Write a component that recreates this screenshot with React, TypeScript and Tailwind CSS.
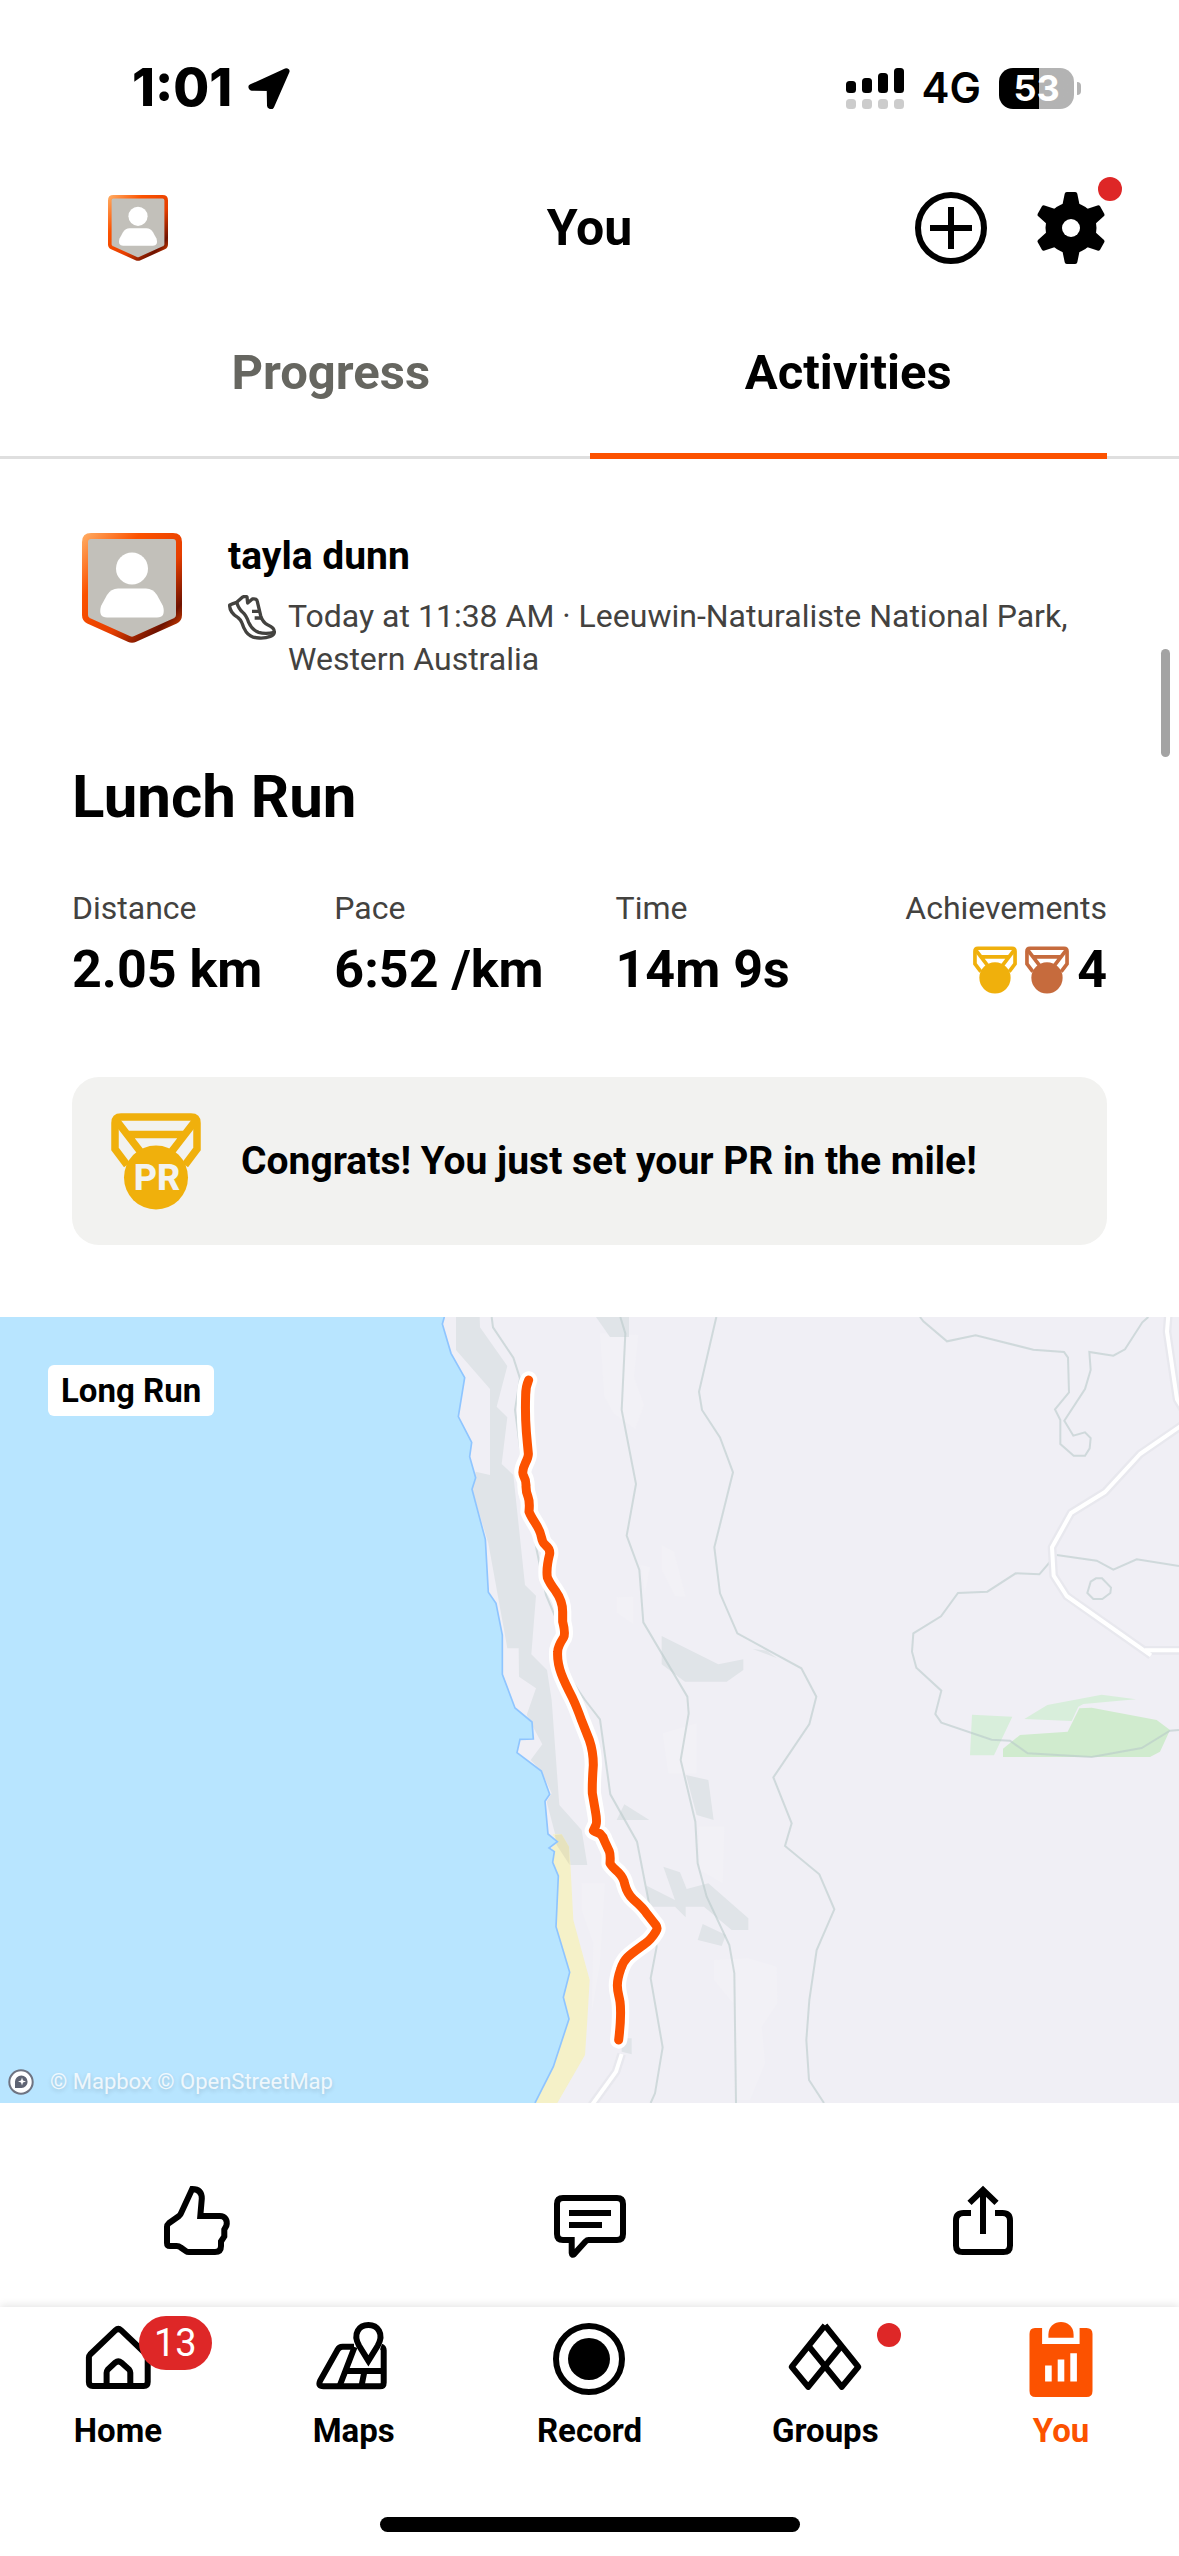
import React, { useId } from 'react';
import clsx from 'clsx';

const ORANGE = '#fc5200';
const GOLD = '#f0b00c';
const BRONZE = '#c66b3d';

interface IconProps {
  className?: string;
}

interface StrokeIconProps extends IconProps {
  children: React.ReactNode;
}

function StrokeIcon({ className = 'size-[72px]', children }: StrokeIconProps) {
  return (
    <svg
      viewBox="0 0 24 24"
      fill="none"
      stroke="currentColor"
      strokeWidth={2}
      aria-hidden="true"
      className={clsx('shrink-0 overflow-visible', className)}
    >
      {children}
    </svg>
  );
}

/* ---------- Icons ---------- */

function LocationIcon() {
  return (
    <svg viewBox="0 0 125 124" aria-hidden="true" className="h-[41px] w-[42px]">
      <path d="M115 10 10 58l1 1 54 1 1 54 3 1Z" fill="#000" stroke="#000" strokeWidth={19} strokeLinejoin="round" />
    </svg>
  );
}

function SignalIcon() {
  return (
    <svg viewBox="0 0 58 41" aria-hidden="true" className="h-[41px] w-[58px]">
      {[12, 15, 20, 25].map((h, i) => (
        <g key={h}>
          <rect x={i * 16} y={25 - h} width={10} height={h} rx={3.5} fill="#000" />
          <rect x={i * 16} y={31} width={10} height={10} rx={3.5} fill="#ccc" />
        </g>
      ))}
    </svg>
  );
}

function GearIcon() {
  return (
    <svg viewBox="0 0 24 24" aria-hidden="true" className="size-[72px]">
      <circle cx={12} cy={12} r={8.5} />
      {[0, 60, 120, 180, 240, 300].map((deg) => (
        <path
          key={deg}
          d="M8.4 5 9.2 4 9.9.6Q10-0 10.6 0h2.8q.6 0 .7.6L14.8 4l.8 1Z"
          transform={`rotate(${deg} 12 12)`}
        />
      ))}
      <circle cx={12} cy={12} r={3} fill="#fff" />
    </svg>
  );
}

function ShieldAvatar({ className }: IconProps) {
  const id = useId();
  return (
    <svg viewBox="0 0 100 110" role="img" aria-label="Profile photo" className={className}>
      <defs>
        <linearGradient id={id} x1="0" y1="0" x2="1" y2="1">
          <stop offset="0" stopColor="#ffa65c" />
          <stop offset="0.28" stopColor="#fc5200" />
          <stop offset="0.6" stopColor="#e63e00" />
          <stop offset="0.84" stopColor="#6e1200" />
          <stop offset="1" stopColor="#fc5200" />
        </linearGradient>
      </defs>
      <path
        d="M9 3H91Q97 3 97 9V82Q97 86 93.500 87.700L53 106Q50 107.500 47 106L6.500 87.700Q3 86 3 82V9Q3 3 9 3Z"
        fill="#c2c0ba"
        stroke={`url(#${id})`}
        strokeWidth={6}
      />
      <circle cx={50} cy={35.5} r={16} fill="#fff" />
      <path d="M36 55.500H64Q71 55.500 75 62L81 73Q84 84.500 75 84.500H25Q16 84.500 19 73L25 62Q29 55.500 36 55.500Z" fill="#fff" />
    </svg>
  );
}

function ShoeIcon() {
  return (
    <svg
      viewBox="0 0 144 135"
      fill="none"
      stroke="#43423f"
      strokeWidth={10}
      strokeLinejoin="round"
      aria-hidden="true"
      className="h-[45px] w-12 shrink-0"
    >
      <path d="M5 30Q15 26 26 22L44 6Q54 2 57 6L59 24 73 12Q87 10 88 20L98 62Q104 82 120 90Q139 98 139 110Q140 119 127 124Q112 130 94 129Q68 129 54 110Q46 98 42 84Q40 76 30 68Q4 52 5 30Z" />
      <path d="M26 22Q32 42 44 52Q54 60 62 82Q72 105 92 112Q112 118 139 112" />
      <path d="M72 49H95M80 69H101" />
    </svg>
  );
}

interface MedalProps extends IconProps {
  color: string;
  label?: string;
}

function Medal({ color, label, className }: MedalProps) {
  return (
    <svg viewBox="0 0 90 97" aria-hidden="true" className={className}>
      <g fill="none" stroke={color} strokeWidth={7.5}>
        <path d="M16 52 4 36V10Q4 4 10 4H80Q86 4 86 10V36L74 52" />
        <path d="M15 21.500H75M5 7 32 42M85 7 58 42" />
      </g>
      <circle cx={45} cy={64.5} r={32} fill={color} />
      {label && (
        <text x={46} y={77} textAnchor="middle" fill="#f2f2f0" className="font-['Roboto',sans-serif] text-[36px] font-extrabold">
          {label}
        </text>
      )}
    </svg>
  );
}

function HomeIcon() {
  return (
    <StrokeIcon>
      <path d="M11.200 2.400 2.700 10.500Q2.300 10.900 2.300 11.500V19.700Q2.300 21 3.600 21H20.600Q21.900 21 21.900 19.700V11.500Q21.900 10.900 21.500 10.500L13 2.400Q12.100 1.600 11.200 2.400Z" />
      <path d="M8.200 21V16.600Q8.200 16 8.600 15.500L11.100 13.200Q12.100 12.400 13.100 13.200L15.700 15.500Q16.100 16 16.100 16.600V21" />
    </StrokeIcon>
  );
}

function MapsIcon() {
  return (
    <StrokeIcon>
      <path d="M12 7.900H8.200Q7 7.900 6.500 9L.7 19.300Q-.1 21.100 1.800 21.100H20.600Q21.900 21.100 21.900 19.800V9.200Q21.900 8.200 21 7.900" />
      <path d="M12.200 8 7.200 21M9.600 16H22M15.500 16 14.500 21" />
      <path d="M16.800 12.600 13.700 7.600C11.400 3.500 13.800.7 16.800.7S22.200 3.500 19.900 7.600Z" />
    </StrokeIcon>
  );
}

function RecordIcon() {
  return (
    <StrokeIcon>
      <circle cx={12} cy={12} r={11} />
      <circle cx={12} cy={12} r={7} fill="currentColor" stroke="none" />
    </StrokeIcon>
  );
}

function GroupsIcon() {
  return (
    <StrokeIcon>
      <path d="M12 .8.9 14.600 6.400 21.300 17.500 7.600M12 .8 23.100 14.600 17.600 21.300 6.500 7.600" strokeLinejoin="round" />
    </StrokeIcon>
  );
}

function YouIcon() {
  return (
    <StrokeIcon>
      <g stroke="none" fill="currentColor">
        <path d="M3.300 1.700H5.700V7H18.200V1.700H20.500Q22.500 1.700 22.500 3.700V22.700Q22.500 24.700 20.500 24.700H3.500Q1.500 24.700 1.500 22.700V3.700Q1.500 1.700 3.300 1.700Z" />
        <path d="M7.800 4.900V3.900C7.800-1.700 16.200-1.700 16.200 3.900V4.900Z" />
        <path d="M6.700 14.200H8.900V19.500H6.700ZM10.900 12.200H13.100V19.500H10.900ZM15.100 10.100H17.300V19.500H15.100Z" fill="#fff" />
      </g>
    </StrokeIcon>
  );
}

function KudosIcon() {
  return (
    <StrokeIcon>
      <path d="M10.400 1 6.700 9Q6.500 9.600 6 10L2.600 12.400Q2 12.900 2 13.600V19Q2 20 3 20H5.200Q6 20 6.600 20.500L8.300 21.700Q8.700 22 9.300 22H18Q20 22 20 20V18.500L21.100 16.800V14.500L21.800 13.200C22.300 11.400 21.300 10 19.600 10H13.100L13.600 4.200Q13.600 1 10.400 1Z" />
    </StrokeIcon>
  );
}

function CommentIcon() {
  return (
    <StrokeIcon>
      <path d="M3 4H21Q23 4 23 6V16Q23 18 21 18H11.500Q11 18 10.500 18.500L6.700 22.700Q6 23.300 5.900 22.300V18H3Q1 18 1 16V6Q1 4 3 4Z" />
      <path d="M5 9H19M5 13H16" />
    </StrokeIcon>
  );
}

function ShareIcon() {
  return (
    <StrokeIcon>
      <path d="M8 9H5.500Q3 9 3 11.500V19.800Q3 22 5.200 22H18.800Q21 22 21 19.800V11.500Q21 9 18.500 9H16" />
      <path d="M12 16V1.500M7.500 5.600 12 1.300 16.500 5.600" />
    </StrokeIcon>
  );
}

/* ---------- Route map ---------- */

const COAST =
  'L133 21 127 42 153 130 194 203 175 320 215 397 209 440 227 503 216 538 256 688 265 847 288 880 307 975 307 1093 345 1194 396 1236 400 1287 360 1288 351 1328 424 1383 449 1453 435 1474 444 1572 472 1595 447 1614 463 1625 458 1657 475 1698 468 1850 509 1987 490 2062 507 2127 460 2270 405 2379';

const ROUTE =
  'M386 210Q377 230 377 255Q375 315 379 365Q382 400 385 430Q386 440 376 460Q364 485 371 498Q379 512 378 530Q378 545 384 560Q390 575 387 605Q392 618 405 638Q421 663 424 680Q427 697 436 705Q451 717 449 732Q438 775 442 802Q448 818 466 842Q488 873 488 905L488 935Q497 970 491 982Q473 1010 473 1025C470 1070 490 1110 518 1165Q530 1190 545 1232L568 1290Q580 1325 580 1365Q576 1420 577 1450L586 1502Q592 1535 588 1545L580 1562Q584 1566 600 1571Q610 1580 613 1592L628 1624Q632 1634 630 1660Q635 1670 655 1687Q672 1705 674 1722Q682 1752 700 1768Q730 1794 742 1813L768 1846Q774 1855 768 1864Q752 1890 734 1902C690 1934 672 1944 662 1978C644 2030 655 2045 660 2075Q665 2115 656 2190';

function RouteMap() {
  return (
    <svg
      viewBox="-1200 21 3537 2358"
      preserveAspectRatio="xMidYMid slice"
      role="img"
      aria-label="Route map"
      className="block w-full"
    >
      <rect x={-1200} y={21} width={3537} height={2358} fill="#f0eff5" />

      {/* scrub */}
      <g fill="#f2f1f6">
        <path d="M600 70 715 75 702 200 732 285 705 357 640 310 613 260Z" />
        <path d="M785 705 822 725 857 860 825 858 785 780ZM650 862 700 860 700 942 650 908ZM722 765 750 772 735 850Z" />
        <path d="M788 1270 890 1240 890 1390 805 1390ZM895 1550 973 1550 968 1720 900 1680ZM942 1950 1045 1945 1130 1970 1132 2080 1085 2150 1095 2260 1050 2370 1005 2370 1000 2080 942 2010ZM545 1720 615 1720 600 1960 575 2110 580 1900 545 1800Z" />
      </g>

      {/* cliffs and rock */}
      <g fill="#e0e4e8">
        <path d="M168 21H239L240 52 322 168 290 290 322 322 305 462 340 495 375 825 408 857 394 1033 441 1080 455 1170 478 1485 545 1560 562 1665H510L470 1590 440 1475 455 1450 424 1383 392 1350 427 1303 380 1215 408 1135 357 1100 356 1015H322L265 700 216 538 227 485 270 495V237L168 120Z" />
        <path d="M588 21H687V81H630Z" />
        <path d="M785 978 955 1063 1030 1048V1080L980 1115H855L785 1063Z" />
        <path d="M1058 1017 1100 1022 1130 1044Z" />
        <path d="M858 1395 925 1410 941 1530 890 1515Z" />
        <path d="M673 1483 748 1530H650Z" />
        <path d="M740 1727 825 1770 790 1670 840 1687 860 1737 925 1720 1045 1825V1860H995L912 1790H857V1822L825 1790H745Z" />
        <path d="M908 1842 978 1875 965 1908 893 1890Z" />
        <path d="M665 2185H695V2233L665 2225Z" />
      </g>

      {/* beach */}
      <path
        d="M485 1573 507 1610 511 1660 520 1830 569 2010 562 2130 555 2235 472 2379H405L460 2270 507 2127 490 2062 509 1987 468 1850 475 1698 458 1657 463 1625 455 1614 472 1595 458 1573Z"
        fill="#f5f1c8"
      />
      <path d="M485 1573 507 1610 509 1665 470 1605 465 1575Z" fill="#e6e2be" />

      <path d={`M-1200 21${COAST}L-1200 2379Z`} fill="#b8e5ff" />
      <path d={COAST.replace('L', 'M')} fill="none" stroke="#8fc5ff" strokeWidth={5} />

      {/* reserves */}
      <path d="M1809 1316 1860 1275 2003 1265 2038 1195 2075 1193 2270 1230 2310 1260 2280 1325 2250 1341H1809Z" fill="#d0ebce" />
      <path d="M1716 1214 1837 1220 1782 1336H1710ZM1873 1227 1942 1185 2105 1154 2208 1168 2050 1182 2035 1190 2015 1233Z" fill="#d8eedb" />

      {/* trails */}
      <g fill="none" stroke="#b9c9ca" strokeOpacity={0.6} strokeWidth={6}>
        <path d="M275 21 279 52 340 143 360 205 345 300 372 500 410 720 438 855 470 930 500 1090 555 1170 600 1228 631 1453 711 1595 745 1770 770 1910 752 2005 788 2212 765 2350 752 2379" />
        <path d="M661 21 676 70 665 300 708 522 680 677 718 780 730 937 862 1160 866 1210 842 1350 886 1535 893 1660 920 1760 988 1905 1003 1990 1008 2379" />
        <path d="M949 21 897 245 906 300 960 382 999 487 943 712 960 850 1012 970 1204 1075 1249 1160 1228 1242 1120 1402 1175 1540 1155 1608 1258 1693 1303 1798 1250 1920 1228 2070 1219 2190 1227 2310 1272 2379" />
        <path d="M1560 21 1570 34 1641 94 1727 76 1900 119 1992 126 2004 143 2007 247 1965 298 1981 330V402L2021 437H2055L2069 415 2072 384 2055 367 2020 377 1993 332 2055 237 2072 180 2068 126 2140 137 2175 118 2227 37 2245 21" />
        <path d="M2337 768 2210 748 2140 779 2090 752 1970 735M1955 750 1918 793 1847 790 1762 845 1674 849 1623 919 1540 970 1536 1025 1549 1073 1624 1142 1606 1212 1624 1238 1775 1289 1830 1292 1883 1330 2075 1341 2225 1314 2310 1262 2337 1260" />
        <path d="M2072 815 2088 805H2106L2133 833 2131 849 2107 867H2080L2062 849Z" />
      </g>

      {/* roads: casing first, then the white surface */}
      {[
        { stroke: '#e8e8ee', width: 26 },
        { stroke: '#fff', width: 12 },
      ].map(({ stroke, width }) => (
        <g key={stroke} fill="none" stroke={stroke} strokeWidth={width} strokeLinejoin="round">
          <path d="M2305 15 2301 65 2331 268 2350 300" />
          <path d="M2345 346 2220 432 2115 546 2013 609 1956 712 1961 797 2000 858 2253 1036M2235 1021H2345" />
          <path d="M665 2232 648 2285 575 2386" />
        </g>
      ))}

      {/* recorded route */}
      <g fill="none" strokeLinecap="round" strokeLinejoin="round">
        <path d={ROUTE} stroke="#fff" strokeWidth={52} />
        <path d={ROUTE} stroke={ORANGE} strokeWidth={27} />
      </g>
    </svg>
  );
}

function MapboxMark() {
  return (
    <svg viewBox="0 0 26 26" aria-hidden="true" className="size-[26px]">
      <circle cx={13} cy={13} r={11.7} fill="#fff" stroke="#6f7482" strokeWidth={2} />
      <path d="M7 19V12.500A6.300 6.300 0 1 1 13.500 19Z" fill="#5f6473" />
      <path d="M14 8.500 15 11.500 18 12.500 15 13.500 14 16.500 13 13.500 10 12.500 13 11.500Z" fill="#fff" />
    </svg>
  );
}

/* ---------- Page ---------- */

const STATS = [
  { label: 'Distance', value: '2.05 km' },
  { label: 'Pace', value: '6:52 /km' },
  { label: 'Time', value: '14m 9s' },
];

const TABS = [
  { label: 'Progress', active: false },
  { label: 'Activities', active: true },
];

const ACTIONS = [
  { label: 'Give kudos', Icon: KudosIcon },
  { label: 'Comment', Icon: CommentIcon },
  { label: 'Share', Icon: ShareIcon },
];

const NAV_ITEMS = [
  { label: 'Home', Icon: HomeIcon, count: 13 },
  { label: 'Maps', Icon: MapsIcon },
  { label: 'Record', Icon: RecordIcon },
  { label: 'Groups', Icon: GroupsIcon, dot: true },
  { label: 'You', Icon: YouIcon, active: true },
];

function StatusBar() {
  return (
    <div className="flex h-[176px] items-center justify-between pr-[98px] pl-[132px] font-['Inter',sans-serif]">
      <div className="flex items-center gap-4">
        <span className="text-[52px] leading-none font-extrabold">1:01</span>
        <LocationIcon />
      </div>
      <div className="flex items-center gap-[18px]">
        <SignalIcon />
        <span className="text-[42px] leading-none font-semibold">4G</span>
        <div className="flex items-center gap-[3px]">
          <div className="flex h-[41px] w-[75px] items-center justify-center rounded-[14px] bg-linear-to-r from-black from-53% to-[#b3b3b3] to-53% text-[36px] leading-none font-bold text-white">
            53
          </div>
          <div className="h-[13px] w-1 rounded-r-full bg-[#b3b3b3]" />
        </div>
      </div>
    </div>
  );
}

export default function App() {
  return (
    <div className="relative flex min-h-screen flex-col bg-white font-['Roboto',sans-serif] text-black">
      <StatusBar />

      <header className="grid h-[104px] grid-cols-[1fr_auto_1fr] items-center px-[72px]">
        <button type="button" aria-label="Profile" className="ml-9 justify-self-start">
          <ShieldAvatar className="h-[66px] w-[60px]" />
        </button>
        <h1 className="text-[50px] leading-[60px] font-bold">You</h1>
        <div className="flex gap-12 justify-self-end">
          <button type="button" aria-label="Add">
            <StrokeIcon>
              <circle cx={12} cy={12} r={11} />
              <path d="M12 5V19M5 12H19" />
            </StrokeIcon>
          </button>
          <button type="button" aria-label="Settings" className="relative">
            <GearIcon />
            <span className="absolute -top-[15px] -right-[15px] size-6 rounded-full bg-[#de2727]" />
          </button>
        </div>
      </header>

      <div role="tablist" className="flex border-b-[3px] border-[#dfdfdf] px-[72px]">
        {TABS.map(({ label, active }) => (
          <button
            key={label}
            type="button"
            role="tab"
            aria-selected={active}
            className={clsx(
              '-mb-[3px] flex-1 border-b-[6px] pt-[63px] pb-[50px] text-[49px] leading-[60px] font-bold',
              active ? 'border-[#fc5200]' : 'border-transparent text-[#666660]',
            )}
          >
            {label}
          </button>
        ))}
      </div>

      <main>
        <article>
          <div className="px-[72px] pt-[74px]">
            <div className="flex gap-[46px] pl-[10px]">
              <ShieldAvatar className="h-[110px] w-[100px] shrink-0" />
              <div className="min-w-0">
                <p className="text-[39px] leading-[46px] font-bold">tayla dunn</p>
                <div className="mt-4 flex gap-3 text-[#43423f]">
                  <ShoeIcon />
                  <p className="text-[32px] leading-[43px]">
                    Today at 11:38 AM · Leeuwin-Naturaliste National Park, Western Australia
                  </p>
                </div>
              </div>
            </div>

            <h2 className="mt-20 text-[60px] leading-[72px] font-bold">Lunch Run</h2>

            <dl className="mt-[55px] flex gap-[72px]">
              {STATS.map(({ label, value }) => (
                <div key={label}>
                  <dt className="text-[32px] leading-10 text-[#43423f]">{label}</dt>
                  <dd className="mt-3 text-[52px] leading-[60px] font-bold">{value}</dd>
                </div>
              ))}
              <div className="ml-auto text-right">
                <dt className="text-[32px] leading-10 text-[#43423f]">Achievements</dt>
                <dd className="mt-3 flex items-center justify-end gap-2 text-[52px] leading-[60px] font-bold">
                  <Medal color={GOLD} className="h-12 w-11" />
                  <Medal color={BRONZE} className="h-12 w-11" />4
                </dd>
              </div>
            </dl>

            <div className="mt-[77px] flex h-[168px] items-center gap-10 rounded-[27px] bg-[#f2f2f0] px-[39px]">
              <Medal color={GOLD} label="PR" className="h-[97px] w-[90px] shrink-0" />
              <p className="text-[39px] leading-[46px] font-bold">Congrats! You just set your PR in the mile!</p>
            </div>
          </div>

          <div className="relative mt-[72px]">
            <RouteMap />
            <span className="absolute top-12 left-12 rounded-md bg-white px-[13px] text-[33px] leading-[51px] font-bold">
              Long Run
            </span>
            <div className="absolute bottom-2 left-2 flex items-center gap-4 text-[22px] leading-[26px] text-white/80 [text-shadow:0_2px_4px_rgb(0_0_0/0.15)]">
              <MapboxMark />
              <span>© Mapbox © OpenStreetMap</span>
            </div>
          </div>

          <div className="grid grid-cols-3 pt-[83px] pb-12">
            {ACTIONS.map(({ label, Icon }) => (
              <button key={label} type="button" aria-label={label} className="justify-self-center">
                <Icon />
              </button>
            ))}
          </div>
        </article>
      </main>

      <footer className="mt-auto bg-white pt-4 pb-6 shadow-[0_-2px_8px_rgb(0_0_0/0.1)]">
        <nav className="grid grid-cols-5">
          {NAV_ITEMS.map(({ label, Icon, count, dot, active }) => (
            <a
              key={label}
              href={`#${label.toLowerCase()}`}
              className={clsx('flex flex-col items-center', active && 'text-[#fc5200]')}
            >
              <span className="relative">
                <Icon />
                {count && (
                  <span className="absolute -top-[7px] left-[57px] rounded-full bg-[#de2727] px-[15px] text-[38px] leading-[54px] text-white">
                    {count}
                  </span>
                )}
                {dot && <span className="absolute top-0 -right-10 size-6 rounded-full bg-[#de2727]" />}
              </span>
              <span className="mt-4 text-[33px] leading-10 font-bold">{label}</span>
            </a>
          ))}
        </nav>
        <div className="mx-auto mt-[66px] h-[15px] w-[420px] rounded-full bg-black" />
      </footer>

      {/* scroll position */}
      <div className="absolute top-[649px] right-[9px] h-[108px] w-[9px] rounded-full bg-[#a3a3a3]" />
    </div>
  );
}
